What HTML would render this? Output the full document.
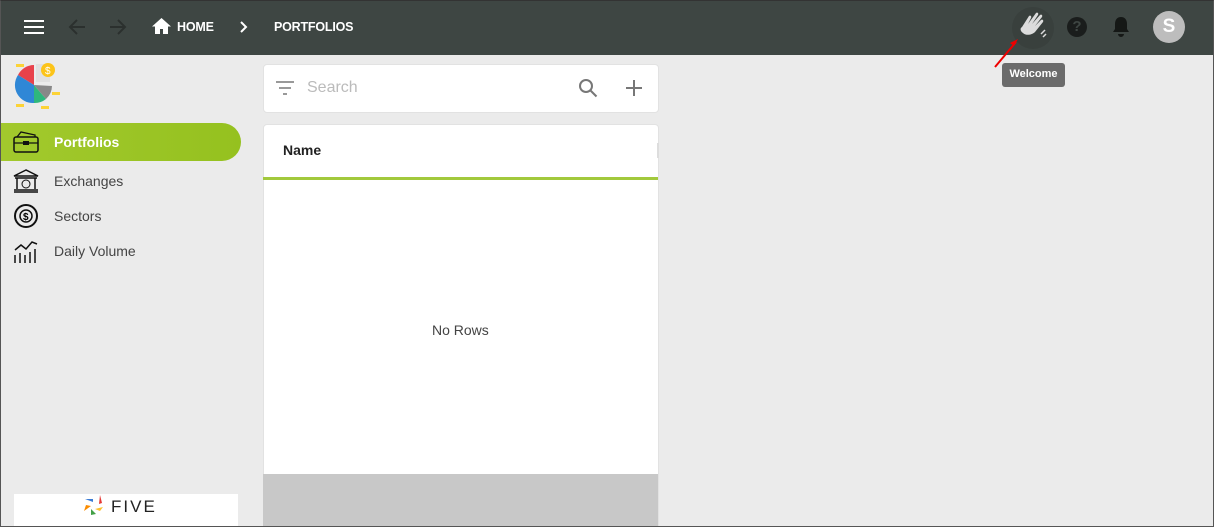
<!DOCTYPE html>
<html><head><style>
*{margin:0;padding:0;box-sizing:border-box}
body{width:1214px;height:527px;overflow:hidden;background:#ebebeb;font-family:"Liberation Sans",Roboto,sans-serif;position:relative}
.frame{position:absolute;inset:0;border:1px solid #555;border-top-color:#333;pointer-events:none;z-index:10}
.hdr{position:absolute;left:0;top:0;width:1214px;height:55px;background:#3e4643}
.t{position:absolute;color:#fff;font-weight:bold;font-size:12.5px;letter-spacing:-0.2px}
.nav{position:absolute;left:0;width:241px;height:38px;display:flex;align-items:center}
.nav span{position:absolute;left:54px;font-size:14px;color:#444}
.ico{position:absolute;left:13px}
</style></head><body>
<div class="hdr">
 <svg style="position:absolute;left:24px;top:19px" width="20" height="16"><path d="M0 2h20M0 8h20M0 14h20" stroke="#fff" stroke-width="2"/></svg>
 <svg style="position:absolute;left:68px;top:18px" width="18" height="18"><path d="M17 9H2M9 2L2 9l7 7" stroke="#2b302e" stroke-width="2" fill="none"/></svg>
 <svg style="position:absolute;left:109px;top:18px" width="18" height="18"><path d="M1 9h15M9 2l7 7-7 7" stroke="#2b302e" stroke-width="2" fill="none"/></svg>
 <svg style="position:absolute;left:152px;top:18px" width="19" height="16"><path d="M9.5 0L0 8.5h3V16h5v-5h3v5h5V8.5h3z" fill="#fff"/></svg>
 <div class="t" style="left:177px;top:20px">HOME</div>
 <svg style="position:absolute;left:239px;top:21px" width="10" height="12"><path d="M2 1l5 5-5 5" stroke="#fff" stroke-width="2" fill="none"/></svg>
 <div class="t" style="left:274px;top:20px">PORTFOLIOS</div>
 <div style="position:absolute;left:1012px;top:7px;width:42px;height:42px;border-radius:50%;background:#39403d"></div>
 <svg style="position:absolute;left:1019px;top:12px" width="30" height="28" viewBox="0 0 30 28"><path d="M3 15l7-11c1-1 3 0 2 2l-3 6 8-11c1-1 3 0 2 2l-6 9 8-9c1-1 3 0 2 2l-7 9 6-6c1-1 3 0 2 2l-8 10c-3 3-9 4-12 1-3-2-3-5-1-6z" fill="#dcdcdc"/><path d="M22 22l4-4M24 25l3-3" stroke="#dcdcdc" stroke-width="1.5"/></svg>
 <div style="position:absolute;left:1067px;top:17px;width:20px;height:20px;border-radius:50%;background:#1a1d1c;color:#3e4643;font-weight:bold;font-size:15px;text-align:center;line-height:20px">?</div>
 <svg style="position:absolute;left:1112px;top:16px" width="18" height="22"><path d="M9 1c-4 0-6 3-6 7v5l-2 3h16l-2-3V8c0-4-2-7-6-7zM6 18a3 3 0 006 0z" fill="#151816"/></svg>
 <div style="position:absolute;left:1153px;top:11px;width:32px;height:32px;border-radius:50%;background:#bdbdbd;color:#fff;font-size:19px;font-weight:bold;text-align:center;line-height:32px">S</div>
</div>
<svg style="position:absolute;left:994px;top:36px" width="26" height="32"><path d="M1 31L22 6" stroke="#e00" stroke-width="2"/><path d="M24 3l-8 4 4 3z" fill="#e00"/></svg>
<div style="position:absolute;left:1002px;top:63px;width:63px;height:24px;background:#6b6b6b;border-radius:3px;color:#fff;font-size:11px;font-weight:bold;text-align:center;line-height:23px">Welcome</div>

<svg style="position:absolute;left:14px;top:62px" width="48" height="48" viewBox="0 0 48 48"><rect x="2" y="2" width="8" height="3" fill="#fcd337"/><path d="M20 23L20 3A18 18 0 0 0 4 13z" fill="#e8424b"/><path d="M20 23L4 13A18 18 0 0 0 20 41z" fill="#2f87d6"/><path d="M20 23L20 41A18 18 0 0 0 32 37z" fill="#2eb77d"/><path d="M20 23L32 37A18 18 0 0 0 38 24z" fill="#888"/><rect x="22" y="2" width="14" height="18" fill="#e0e0e0"/><circle cx="34" cy="8" r="7" fill="#fcc419"/><text x="31" y="12" font-size="10" fill="#fff">$</text><rect x="38" y="30" width="8" height="3" fill="#fcd337"/><rect x="2" y="42" width="8" height="3" fill="#fcd337"/><rect x="27" y="44" width="8" height="3" fill="#fcd337"/></svg>

<div class="nav" style="top:123px;background:linear-gradient(90deg,#a2c92d,#95c11f);border-radius:0 19px 19px 0"><svg class="ico" width="26" height="22"><rect x="1" y="6" width="24" height="15" rx="2" fill="none" stroke="#111" stroke-width="1.5"/><path d="M1 12h24M4 6l4-5 14 3v2" stroke="#111" stroke-width="1.3" fill="none"/><rect x="10" y="10" width="6" height="4" fill="#111"/></svg><span style="color:#fff;font-weight:bold">Portfolios</span></div>
<div class="nav" style="top:162px"><svg class="ico" width="26" height="24"><path d="M13 1L1 7h24zM2 9h22M4 9v11M22 9v11M1 21h24M1 23h24" stroke="#111" stroke-width="1.5" fill="none"/><circle cx="13" cy="15" r="4" fill="none" stroke="#111"/></svg><span>Exchanges</span></div>
<div class="nav" style="top:197px"><svg class="ico" width="26" height="26"><circle cx="13" cy="13" r="11" fill="none" stroke="#111" stroke-width="2"/><circle cx="13" cy="13" r="6" fill="none" stroke="#111" stroke-width="1.5"/><text x="10" y="17" font-size="10" font-weight="bold">$</text></svg><span>Sectors</span></div>
<div class="nav" style="top:232px"><svg class="ico" width="26" height="26"><path d="M2 12l6-5 5 4 6-7 5 2M2 25v-8M7 25v-10M12 25v-8M17 25v-11M22 25v-14" stroke="#111" stroke-width="1.5" fill="none"/></svg><span>Daily Volume</span></div>

<div style="position:absolute;left:14px;top:494px;width:224px;height:33px;background:#fff"></div>
<svg style="position:absolute;left:83px;top:494px" width="22" height="24"><path d="M2 5l8 3 0-3z" fill="#3a7bd5"/><path d="M17 1l-1 9 3-1z" fill="#e53935"/><path d="M20 13l-8 2 5 2z" fill="#fbc02d"/><path d="M13 20l-5-5 0 6z" fill="#43a047"/><path d="M1 17l7-5-5-1z" fill="#fb8c00"/></svg>
<div style="position:absolute;left:111px;top:497px;font-size:17px;letter-spacing:2px;color:#222">FIVE</div>

<div style="position:absolute;left:263px;top:64px;width:396px;height:49px;background:#fff;border-radius:4px;border:1px solid #e2e2e2"></div>
<svg style="position:absolute;left:276px;top:81px" width="18" height="14"><path d="M0 1h18M3 7h12M7 13h4" stroke="#999" stroke-width="2"/></svg>
<div style="position:absolute;left:307px;top:79px;font-size:16px;color:#bbb">Search</div>
<svg style="position:absolute;left:578px;top:78px" width="20" height="20"><circle cx="8" cy="8" r="6" fill="none" stroke="#777" stroke-width="2"/><path d="M12.5 12.5l6 6" stroke="#777" stroke-width="2"/></svg>
<svg style="position:absolute;left:626px;top:80px" width="16" height="16"><path d="M8 0v16M0 8h16" stroke="#777" stroke-width="2"/></svg>

<div style="position:absolute;left:263px;top:124px;width:396px;height:403px;background:#fff;border:1px solid #e2e2e2;border-radius:4px 4px 0 0"></div>
<div style="position:absolute;left:283px;top:142px;font-size:14px;font-weight:bold;color:#222">Name</div>
<div style="position:absolute;left:657px;top:143px;width:2px;height:15px;background:#ddd"></div>
<div style="position:absolute;left:263px;top:177px;width:395px;height:3px;background:#a2c93c"></div>
<div style="position:absolute;left:432px;top:322px;font-size:14px;color:#444">No Rows</div>
<div style="position:absolute;left:263px;top:474px;width:395px;height:53px;background:#c8c8c8"></div>
<div class="frame"></div>
</body></html>
